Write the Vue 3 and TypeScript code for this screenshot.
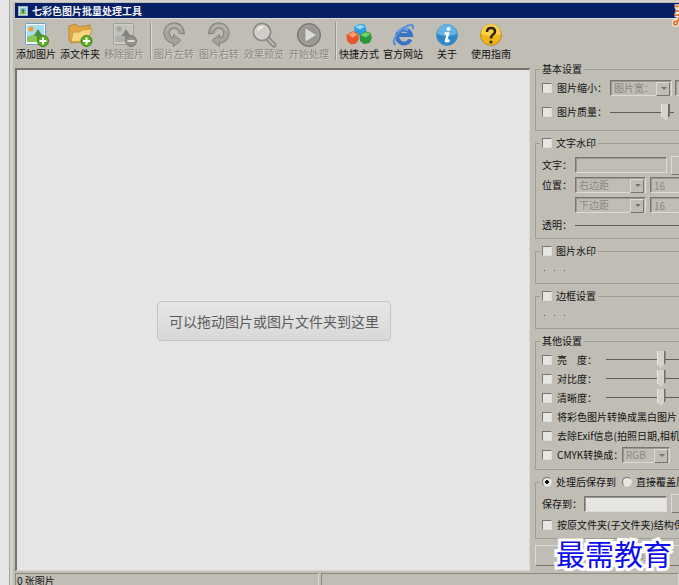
<script setup lang="ts">
import { ref } from 'vue'

interface Tool {
  icon: string
  label: string
  disabled?: boolean
}

const toolGroups: Tool[][] = [
  [
    { icon: 'add-image', label: '添加图片' },
    { icon: 'add-folder', label: '添文件夹' },
    { icon: 'remove-image', label: '移除图片', disabled: true },
  ],
  [
    { icon: 'rotate-left', label: '图片左转', disabled: true },
    { icon: 'rotate-right', label: '图片右转', disabled: true },
    { icon: 'preview', label: '效果预览', disabled: true },
    { icon: 'start', label: '开始处理', disabled: true },
  ],
  [
    { icon: 'shortcut', label: '快捷方式' },
    { icon: 'website', label: '官方网站' },
    { icon: 'about', label: '关于' },
    { icon: 'guide', label: '使用指南' },
  ],
]

const adjustments = [
  { id: 'brightness', label: '亮　度：' },
  { id: 'contrast', label: '对比度：' },
  { id: 'sharpness', label: '清晰度：' },
]

const quality = ref(93)
const saveMode = ref('folder')
</script>

<template>
  <div class="window">
    <header class="titlebar">
      <svg class="app-icon" viewBox="0 0 12 12" aria-hidden="true">
        <rect x="0.5" y="0.5" width="11" height="11" fill="#e8efe4" stroke="#9db9c4" />
        <rect x="2" y="2" width="8" height="5" fill="#8cc8dc" />
        <rect x="2" y="7" width="8" height="3" fill="#8dbb6c" />
        <path d="M6 3 L8.5 6 H7 V9 H5 V6 H3.5Z" fill="#3f7d42" />
      </svg>
      <h1>七彩色图片批量处理工具</h1>
    </header>

    <svg class="corner-mark" viewBox="0 0 8 26" aria-hidden="true">
      <path d="M3 2H8M4 7H8M3 12H8M8 15L5 20" fill="none" stroke="#f3e6d8" stroke-width="5" />
      <circle cx="4" cy="21" r="2.5" fill="#e8853a" stroke="#f3e6d8" stroke-width="4" />
      <path d="M3 2H8M4 7H8M3 12H8M8 15L6 20" fill="none" stroke="#dd7430" stroke-width="2" />
      <circle cx="4" cy="21" r="2" fill="#f3e6d8" stroke="#dd7430" stroke-width="2" />
    </svg>

    <nav class="toolbar">
      <template v-for="(group, g) in toolGroups" :key="g">
        <span v-if="g > 0" class="separator"></span>
        <div class="tool-group">
          <button v-for="tool in group" :key="tool.icon" type="button" class="tool" :disabled="tool.disabled">
            <svg viewBox="0 0 26 26" aria-hidden="true">
              <g v-if="tool.icon === 'add-image'">
                <rect x="2.5" y="1.5" width="20" height="21" rx="1" fill="#f4f8f8" stroke="#6ba2bd" />
                <rect x="4" y="3" width="17" height="13" fill="#a5dcf0" />
                <path d="M4 15 Q10 11 21 15 V20 H4Z" fill="#8cc35a" />
                <circle cx="8" cy="7" r="2.6" fill="#f3a02e" />
                <path d="M15 7 L19.5 14 H16 V17 H14 V14 H10.5Z" fill="#4d8c3c" />
                <circle cx="20" cy="19" r="5.5" fill="#5fae25" stroke="#3d8117" />
                <path d="M20 15.5V22.5M16.5 19H23.5" stroke="#fff" stroke-width="2" />
              </g>
              <g v-else-if="tool.icon === 'remove-image'">
                <rect x="2.5" y="1.5" width="20" height="21" rx="1" fill="#cfcdc7" stroke="#a09e98" />
                <rect x="4" y="3" width="17" height="13" fill="#c3c1bb" />
                <path d="M4 15 Q10 11 21 15 V20 H4Z" fill="#b1afa9" />
                <circle cx="8" cy="7" r="2.6" fill="#a5a39d" />
                <path d="M15 7 L19.5 14 H16 V17 H14 V14 H10.5Z" fill="#85837e" />
                <circle cx="20" cy="19" r="5.5" fill="#93918c" stroke="#7d7b76" />
                <path d="M16.5 19H23.5" stroke="#dddbd5" stroke-width="2" />
              </g>
              <g v-else-if="tool.icon === 'add-folder'">
                <path d="M2 18 V4 L9 2 L11 5 L23 3 V9 L20 19 L4 21Z" fill="#e0a83e" stroke="#b58836" />
                <path d="M4 20 L6 10 L13 10 L15 8 L25 7 L21 19Z" fill="#f7d57c" stroke="#c99b40" />
                <circle cx="19.5" cy="19" r="5.5" fill="#5fae25" stroke="#3d8117" />
                <path d="M19.5 15.5V22.5M16 19H23" stroke="#fff" stroke-width="2" />
              </g>
              <g v-else-if="tool.icon === 'rotate-left' || tool.icon === 'rotate-right'"
                :transform="tool.icon === 'rotate-right' ? 'translate(26 0) scale(-1 1)' : undefined">
                <path d="M20.5 12 A7.5 7.5 0 1 0 13 18.5" fill="none" stroke="#83817c" stroke-width="6.5" />
                <path d="M12.5 12.5 L20 18.5 L12.5 24.5Z" fill="#a5a39d" stroke="#83817c" />
                <path d="M20.5 11 A7.5 7.5 0 1 0 13.5 18.5" fill="none" stroke="#a5a39d" stroke-width="4.5" />
                <path d="M5 9 A8.5 8.5 0 0 1 20 7" fill="none" stroke="#bab8b2" stroke-width="1.5" />
              </g>
              <g v-else-if="tool.icon === 'preview'">
                <path d="M16 16 L23 23" stroke="#85837e" stroke-width="5" stroke-linecap="round" />
                <path d="M17 17 L23 23" stroke="#bebcb6" stroke-width="2" stroke-linecap="round" />
                <circle cx="11" cy="10" r="8.5" fill="#c9c7c1" stroke="#8e8c87" stroke-width="2" />
                <circle cx="11" cy="10" r="7" fill="#cfcdc8" stroke="#dad8d2" />
                <path d="M7 9 A5 5 0 0 1 12 5" fill="none" stroke="#efeee9" stroke-width="2" />
              </g>
              <g v-else-if="tool.icon === 'start'">
                <circle cx="13" cy="13" r="11.5" fill="#8d8b86" stroke="#73716d" />
                <circle cx="13" cy="13" r="9.5" fill="#999791" stroke="#aaa8a2" />
                <path d="M9.5 6.5 L20 13 L9.5 19.5Z" fill="#dddbd6" />
              </g>
              <g v-else-if="tool.icon === 'shortcut'">
                <path d="M14 1.5 L19 3 L20.5 8 L18.5 12 L13 13.5 L9 11 L8 5Z" fill="#2f9fdd" />
                <path d="M9 5 L14 2.5 L19 4.500 L14 7.5Z" fill="#8edbf7" />
                <path d="M7 9 L12 11.5 L13 17 L10 21.500 L5 22.5 L1 19 L0.500 13Z" fill="#e5562a" />
                <path d="M2 13 L7 10 L11.500 12.5 L7 15.5Z" fill="#f9a073" />
                <path d="M19 9 L24.5 11 L26 16 L23.500 21 L18 22 L14 19 L13.5 13Z" fill="#28963b" />
                <path d="M14.5 13 L19 10 L24.500 12 L20 15.500Z" fill="#71cf6c" />
              </g>
              <g v-else-if="tool.icon === 'website'">
                <path d="M20.500 17.5 A7 7 0 1 1 21 13 H9" fill="none" stroke="#3a74c4" stroke-width="4" />
                <path d="M7.500 10 A6.500 6.500 0 0 1 18 8.500" fill="none" stroke="#78b2ea" stroke-width="1.500" />
                <path d="M6 22.500 C0 22 7 10 15 5 C20 2 25 2 22.500 7" fill="none" stroke="#5590dc" stroke-width="2" />
              </g>
              <g v-else-if="tool.icon === 'about'">
                <circle cx="13" cy="13" r="10.500" fill="#2f87c5" stroke="#4b8fbf" />
                <path d="M3 12 A10 10 0 0 1 23 12 Q13 16 3 12Z" fill="#65b3e2" />
                <circle cx="14.5" cy="7" r="2" fill="#fff" />
                <path d="M10.5 11.5 H14 L12 19 Q13 20 15.5 18" fill="none" stroke="#fff" stroke-width="2.5" />
              </g>
              <g v-else>
                <circle cx="13" cy="13" r="10.500" fill="#f0b414" stroke="#b58a35" />
                <path d="M3 12 A10 10 0 0 1 23 12 Q13 16 3 12Z" fill="#fad04a" />
                <path d="M9 10 Q9 6 13 6 Q17 6 17 9.5 Q17 11.5 14.5 13 Q13 14 13 16.5" fill="none" stroke="#2f2410" stroke-width="2.5" />
                <circle cx="13" cy="20" r="1.6" fill="#2f2410" />
              </g>
            </svg>
            <span>{{ tool.label }}</span>
          </button>
        </div>
      </template>
    </nav>

    <div class="workspace">
      <main class="drop-area">
        <p class="drop-hint">可以拖动图片或图片文件夹到这里</p>
      </main>

      <aside class="settings">
        <form class="settings-form" @submit.prevent>
          <fieldset class="basic">
            <legend>基本设置</legend>
            <div class="row">
              <label class="check"><input type="checkbox" />图片缩小：</label>
              <span class="combo wide-combo">
                <select disabled aria-label="缩小方式"><option>图片宽：</option></select>
              </span>
              <input class="field number" type="text" disabled aria-label="图片宽度" />
            </div>
            <div class="row">
              <label class="check"><input type="checkbox" />图片质量：</label>
              <input v-model="quality" class="slider short" type="range" aria-label="图片质量" />
            </div>
          </fieldset>

          <fieldset class="text-mark">
            <legend><label class="check"><input type="checkbox" />文字水印</label></legend>
            <div class="row">
              <label class="caption" for="mark-text">文字：</label>
              <input id="mark-text" class="field text-field" type="text" disabled />
              <button class="push" type="button" disabled>字体</button>
            </div>
            <div class="row">
              <label class="caption" for="mark-x">位置：</label>
              <span class="combo edge-combo">
                <select id="mark-x" disabled><option>右边距</option></select>
              </span>
              <input class="field number" type="text" value="16" disabled aria-label="右边距" />
            </div>
            <div class="row">
              <span class="caption"></span>
              <span class="combo edge-combo">
                <select disabled aria-label="垂直位置"><option>下边距</option></select>
              </span>
              <input class="field number" type="text" value="16" disabled aria-label="下边距" />
            </div>
            <div class="row">
              <label class="caption" for="mark-alpha">透明：</label>
              <input id="mark-alpha" class="slider long" type="range" value="100" />
            </div>
          </fieldset>

          <fieldset class="collapsed">
            <legend><label class="check"><input type="checkbox" />图片水印</label></legend>
            <div class="dots"><i></i><i></i><i></i></div>
          </fieldset>

          <fieldset class="collapsed">
            <legend><label class="check"><input type="checkbox" />边框设置</label></legend>
            <div class="dots"><i></i><i></i><i></i></div>
          </fieldset>

          <fieldset class="other">
            <legend>其他设置</legend>
            <div v-for="item in adjustments" :key="item.id" class="row">
              <label class="check adjust"><input type="checkbox" />{{ item.label }}</label>
              <input class="slider" type="range" value="50" :aria-label="item.label" />
            </div>
            <div class="row">
              <label class="check"><input type="checkbox" />将彩色图片转换成黑白图片</label>
            </div>
            <div class="row">
              <label class="check"><input type="checkbox" />去除Exif信息(拍照日期,相机型号)</label>
            </div>
            <div class="row">
              <label class="check cmyk"><input type="checkbox" />CMYK转换成：</label>
              <span class="combo mode-combo">
                <select disabled aria-label="颜色模式"><option>RGB</option></select>
              </span>
            </div>
          </fieldset>

          <fieldset class="save">
            <legend class="radios">
              <label class="check"><input v-model="saveMode" type="radio" name="save" value="folder" />处理后保存到</label>
              <label class="check"><input v-model="saveMode" type="radio" name="save" value="overwrite" />直接覆盖原图</label>
            </legend>
            <div class="row">
              <label class="save-caption" for="save-path">保存到：</label>
              <input id="save-path" class="field path-field" type="text" />
              <button class="push" type="button" aria-label="浏览"></button>
            </div>
            <div class="row">
              <label class="check"><input type="checkbox" />按原文件夹(子文件夹)结构保存</label>
            </div>
          </fieldset>

          <button class="push process" type="button" disabled>开始处理</button>
        </form>
        <div class="brand">最需教育</div>
      </aside>
    </div>

    <footer class="status">
      <span>0 张图片</span>
      <span></span>
    </footer>
  </div>
</template>

<style>
html,
body {
  margin: 0;
  background: #e5e5e5;
}
</style>

<style scoped>
* {
  box-sizing: border-box;
}

.window {
  position: relative;
  height: 100vh;
  margin-left: 9px;
  padding: 3px 0 0 4px;
  border-left: 1px solid #a5a5a3;
  display: flex;
  flex-direction: column;
  overflow: hidden;
  background: #c0bdb5;
  box-shadow: inset 3px 2px 0 #d3d1cb;
  color: #111;
  font: 10px/14px "Noto Sans CJK SC", sans-serif;
}

button,
input,
select {
  margin: 0;
  font: inherit;
  color: inherit;
}

.titlebar {
  display: flex;
  align-items: center;
  gap: 4px;
  height: 15px;
  padding-left: 3px;
  background: #082065;
  margin-left: 1px;
  flex: none;
}

.app-icon {
  width: 10px;
  height: 10px;
}

h1 {
  margin: 0;
  color: #f2f4fa;
  font-size: 10px;
  font-weight: 700;
}

.corner-mark {
  position: absolute;
  right: 0;
  top: 3px;
  width: 7px;
  height: 26px;
}

.toolbar {
  display: flex;
  height: 50px;
  padding-top: 3px;
  border-top: 1px solid #dedcd6;
  flex: none;
}

.tool-group {
  display: flex;
}

.tool-group:nth-of-type(2) {
  gap: 1px;
}

.tool {
  width: 44px;
  height: 39px;
  padding: 0;
  border: 0;
  background: none;
  display: flex;
  flex-direction: column;
  align-items: center;
  white-space: nowrap;
}

.tool svg {
  width: 26px;
  height: 26px;
  flex: none;
}

.tool span {
  line-height: 11px;
}

.tool:disabled,
.push:disabled {
  color: #8b8982;
  text-shadow: 1px 1px 0 #d8d6d0;
}

.separator {
  width: 2px;
  height: 38px;
  margin-left: 4px;
  border-left: 1px solid #96948e;
  border-right: 1px solid #d8d6d0;
}

.workspace {
  flex: 1;
  min-height: 0;
  display: grid;
  grid-template-columns: minmax(0, 1fr) 144px;
  column-gap: 5px;
  padding-left: 1px;
}

.drop-area {
  display: flex;
  align-items: center;
  justify-content: center;
  border: 2px solid #74726d;
  border-right-color: #d8d6d0;
  border-bottom-color: #d8d6d0;
  border-right-width: 1px;
  border-bottom-width: 1px;
  background: #e5e5e5;
}

.drop-hint {
  margin: 2px 0 0 2px;
  padding: 9px 11px;
  border: 1px solid #c4c4c4;
  border-radius: 4px;
  background: linear-gradient(#e6e6e6, #d8d8d8);
  color: #5c5c5c;
  font-size: 14px;
  line-height: 20px;
  white-space: nowrap;
}

.settings {
  position: relative;
  min-width: 0;
  overflow: hidden;
  margin-top: -6px;
}

.settings-form {
  display: flex;
  flex-direction: column;
  gap: 5px;
  width: 240px;
  white-space: nowrap;
}

fieldset {
  min-width: 0;
  margin: 0;
  padding: 0 5px;
  border: 1px solid #a09e97;
}

fieldset.basic {
  padding-bottom: 6px;
}

fieldset.text-mark {
  padding-top: 5px;
  padding-bottom: 3px;
}

fieldset.other {
  padding-top: 2px;
  padding-bottom: 5px;
}

fieldset.save {
  padding-top: 4px;
  padding-bottom: 3px;
}

legend {
  height: 14px;
  margin-left: -1px;
  padding: 0 2px;
}

.radios {
  display: flex;
  gap: 6px;
}

.row {
  display: flex;
  align-items: center;
  gap: 4px;
}

.basic .row {
  height: 24px;
  gap: 3px;
}

.text-mark .row {
  height: 20px;
}

.other .row {
  height: 19px;
}

.save .row {
  height: 21px;
}

.row > .check {
  margin-left: 1px;
}

.check {
  display: flex;
  align-items: center;
  gap: 5px;
}

legend .check {
  gap: 4px;
}

.check input {
  appearance: none;
  width: 10px;
  height: 10px;
  border: 1px solid #77756f;
  border-right-color: #dddbd5;
  border-bottom-color: #dddbd5;
  background: #e7e6e3;
  flex: none;
}

.check input[type="radio"] {
  border-radius: 50%;
}

.check input[type="radio"]:checked {
  background: radial-gradient(circle, #111 0 2px, #e7e6e3 2px);
}

.adjust {
  width: 60px;
}

.cmyk {
  width: 76px;
}

.caption {
  width: 30px;
  padding-left: 1px;
}

.save-caption {
  width: 39px;
  padding-left: 1px;
}

.field,
select {
  height: 16px;
  border: 1px solid #77756f;
  border-right-color: #dddbd5;
  border-bottom-color: #dddbd5;
  box-shadow: inset 1px 1px 0 #9a9892;
  border-radius: 0;
  background: #e7e6e3;
  padding: 0 3px;
  line-height: 14px;
}

.field:disabled,
select:disabled {
  background: #c0bdb5;
  color: #8b8982;
  opacity: 1;
}

.text-field {
  width: 92px;
}

.path-field {
  width: 83px;
}

.number {
  width: 50px;
}

.combo {
  position: relative;
  display: flex;
}

.combo select {
  appearance: none;
  width: 100%;
}

.wide-combo {
  width: 62px;
}

.edge-combo {
  width: 71px;
}

.mode-combo {
  width: 48px;
}

.combo::before {
  content: "";
  position: absolute;
  right: 2px;
  top: 2px;
  width: 12px;
  height: 12px;
  border: 1px solid #dddbd5;
  border-right-color: #77756f;
  border-bottom-color: #77756f;
  background: #c0bdb5;
}

.combo::after {
  content: "";
  position: absolute;
  right: 5px;
  top: 7px;
  border: 3px solid transparent;
  border-top-color: #77756f;
  border-bottom: 0;
}

.slider {
  appearance: none;
  width: 110px;
  height: 18px;
  background: linear-gradient(#5f5d58, #5f5d58) center / 100% 1px no-repeat;
}

.slider.short {
  width: 64px;
}

.slider.long {
  width: 150px;
}

.slider::-webkit-slider-thumb {
  appearance: none;
  width: 9px;
  height: 17px;
  background: linear-gradient(90deg, #eceae5 1px, #d4d2cc 1px 7px, #6e6c67 7px);
  clip-path: polygon(0 0, 100% 0, 100% 70%, 50% 100%, 0 76%);
}

.dots {
  display: flex;
  align-items: center;
  gap: 9px;
  height: 25px;
  padding-left: 3px;
}

.dots i {
  width: 1px;
  height: 1px;
  background: #55534e;
}

.push {
  width: 44px;
  height: 19px;
  padding: 0 3px;
  border: 1px solid #dddbd5;
  border-right-color: #77756f;
  border-bottom-color: #77756f;
  background: #c0bdb5;
  line-height: 14px;
}

.process {
  width: 100%;
  height: 21px;
  margin-top: 1px;
  padding-right: 52px;
}

.brand {
  position: absolute;
  right: 7px;
  bottom: 2px;
  color: #0c0cec;
  font-size: 29px;
  font-weight: 400;
  line-height: 32px;
  white-space: nowrap;
  -webkit-text-stroke: 6px #fff;
  paint-order: stroke fill;
}

.status {
  display: grid;
  grid-template-columns: 304px minmax(0, 1fr);
  gap: 2px;
  height: 12px;
  margin: 2px 0 0 1px;
  line-height: 13px;
  flex: none;
}

.status span {
  padding-left: 1px;
  border-top: 1px solid #8b8982;
  border-left: 1px solid #8b8982;
  border-right: 1px solid #dddbd5;
}
</style>
